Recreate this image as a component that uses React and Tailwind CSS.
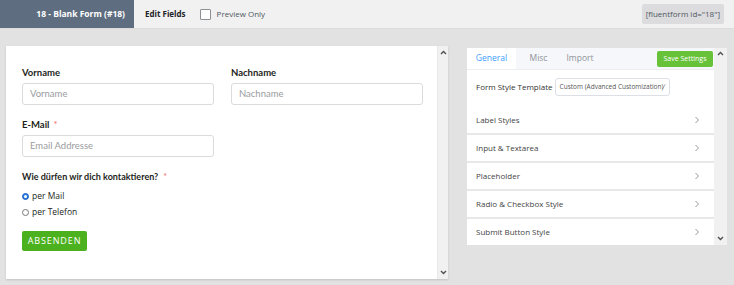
import React from "react";

const Chevron = () => (
  <svg width="6" height="8" viewBox="0 0 6 8" className="text-[#9a9a9a]">
    <path d="M1.5 1 L4.5 4 L1.5 7" fill="none" stroke="currentColor" strokeWidth="1" />
  </svg>
);

const ArrowUp = () => (
  <svg width="7" height="5" viewBox="0 0 7 5">
    <path d="M1 4 L3.5 1.5 L6 4" fill="none" stroke="#505050" strokeWidth="1.4" />
  </svg>
);
const ArrowDown = () => (
  <svg width="7" height="5" viewBox="0 0 7 5">
    <path d="M1 1 L3.5 3.5 L6 1" fill="none" stroke="#505050" strokeWidth="1.4" />
  </svg>
);

const lato = { fontFamily: "Lato, 'Open Sans', sans-serif" };

function Field({ label, placeholder, required }) {
  return (
    <div className="flex flex-col w-[192px]">
      <div style={lato} className="h-[16px] leading-[16px] text-[9.5px] font-bold text-[#1e1f21] mb-[2px]">
        {label}
        {required && <span className="text-[#f56c6c] ml-[4px] font-normal">*</span>}
      </div>
      <div style={lato} className="h-[22px] border border-[#dadbdd] rounded-[3px] bg-white flex items-center pl-[7px] text-[9.5px] text-[#9a9ca0]">
        {placeholder}
      </div>
    </div>
  );
}

function ListItem({ label }) {
  return (
    <div className="h-[26px] bg-white flex items-center justify-between pl-[9px] pr-[14px] text-[8px] text-[#444]">
      <span>{label}</span>
      <Chevron />
    </div>
  );
}

export default function App() {
  return (
    <div
      className="w-[734px] h-[285px] bg-[#e2e2e2] overflow-hidden flex flex-col"
      style={{ fontFamily: "'Open Sans', 'Noto Sans', sans-serif" }}
    >
      {/* Top bar */}
      <div className="h-[29px] bg-[#f1f1f2] flex items-center border-b border-[#dcdcdc] shrink-0">
        <div className="w-[134px] h-full bg-[#5e6d7f] flex items-center justify-end pr-[9px] text-white text-[8.5px] font-bold">
          18 - Blank Form (#18)
        </div>
        <div className="ml-[11px] text-[8px] font-bold text-[#1d2327]">Edit Fields</div>
        <div className="ml-[14px] w-[11px] h-[11px] border border-[#8c8f94] bg-white rounded-[1px]" />
        <div className="ml-[6px] text-[8px] text-[#50575e]">Preview Only</div>
        <div className="ml-auto mr-[10px] h-[20px] px-[4px] bg-[#dcdcde] rounded-[2px] flex items-center text-[8px] text-[#50575e]">
          [fluentform id="18"]
        </div>
      </div>

      {/* Main */}
      <div className="flex pl-[6px] pt-[17px]">
        {/* Left editor panel */}
        <div className="w-[442px] h-[233px] flex bg-white shadow-[0_1px_2px_rgba(0,0,0,0.15)]">
          <div className="flex-1 pl-[16px] pt-[19px]">
            <div className="flex gap-[17px]">
              <Field label="Vorname" placeholder="Vorname" />
              <Field label="Nachname" placeholder="Nachname" />
            </div>
            <div className="mt-[12px]">
              <Field label="E-Mail" placeholder="Email Addresse" required />
            </div>
            <div style={lato} className="mt-[12px] h-[16px] leading-[16px] text-[9px] font-bold text-[#1e1f21]">
              Wie dürfen wir dich kontaktieren?
              <span className="text-[#f56c6c] ml-[5px] font-normal">*</span>
            </div>
            <div className="mt-[3px] flex items-center h-[16px] text-[8.5px] text-[#1e1f21]">
              <span className="w-[7px] h-[7px] rounded-full bg-[#2a7ae2] border border-[#1f65c2] mr-[3px] flex items-center justify-center">
                <span className="w-[3px] h-[3px] rounded-full bg-white" />
              </span>
              per Mail
            </div>
            <div className="flex items-center h-[16px] text-[8.5px] text-[#1e1f21]">
              <span className="w-[7px] h-[7px] rounded-full border border-[#777] bg-white mr-[3px]" />
              per Telefon
            </div>
            <div className="mt-[11px] w-[65px] h-[20px] rounded-[2px] bg-[#4cb11e] flex items-center justify-center text-white text-[9px] tracking-[0.9px] font-medium">
              ABSENDEN
            </div>
          </div>
          <div className="w-[11px] bg-[#f1f1f1] flex flex-col items-center justify-between py-[4px] border-l border-[#e8e8e8]">
            <ArrowUp />
            <ArrowDown />
          </div>
        </div>

        {/* Right settings panel */}
        <div className="ml-[19px] mt-[2px] w-[260px] h-[197px] flex">
          <div className="flex-1 flex flex-col bg-[#e8e8e8] gap-[2px]">
            <div className="bg-white">
              <div className="h-[22px] flex bg-[#f5f7fa] border-b border-[#eceef2]">
                <div className="w-[49px] bg-white flex items-center justify-center text-[8.5px] text-[#409eff]">
                  General
                </div>
                <div className="w-[45px] flex items-center justify-center text-[8.5px] text-[#909399]">Misc</div>
                <div className="w-[38px] flex items-center justify-center text-[8.5px] text-[#909399]">Import</div>
                <div className="ml-auto mr-[1px] mt-[3px] w-[56px] h-[16px] bg-[#67c23a] rounded-[2px] flex items-center justify-center text-white text-[7px]">
                  Save Settings
                </div>
              </div>
              <div className="h-[36px] flex items-center pl-[9px] pb-[3px]">
                <span className="text-[8px] text-[#333]">Form Style Template</span>
                <div className="ml-[2px] w-[115px] h-[18px] border border-[#dcdfe6] rounded-[3px] flex items-center pl-[4px] text-[6.5px] text-[#555] overflow-hidden whitespace-nowrap">
                  Custom (Advanced Customization)⁄
                </div>
              </div>
              <div className="h-[27px] flex items-center justify-between pl-[9px] pr-[14px] text-[8px] text-[#444]">
                <span>Label Styles</span>
                <Chevron />
              </div>
            </div>
            <ListItem label="Input & Textarea" />
            <ListItem label="Placeholder" />
            <ListItem label="Radio & Checkbox Style" />
            <ListItem label="Submit Button Style" />
          </div>
          <div className="w-[13px] bg-[#f1f1f1] flex flex-col items-center justify-between pt-[3px] pb-[4px]">
            <ArrowUp />
            <ArrowDown />
          </div>
        </div>
      </div>
    </div>
  );
}
